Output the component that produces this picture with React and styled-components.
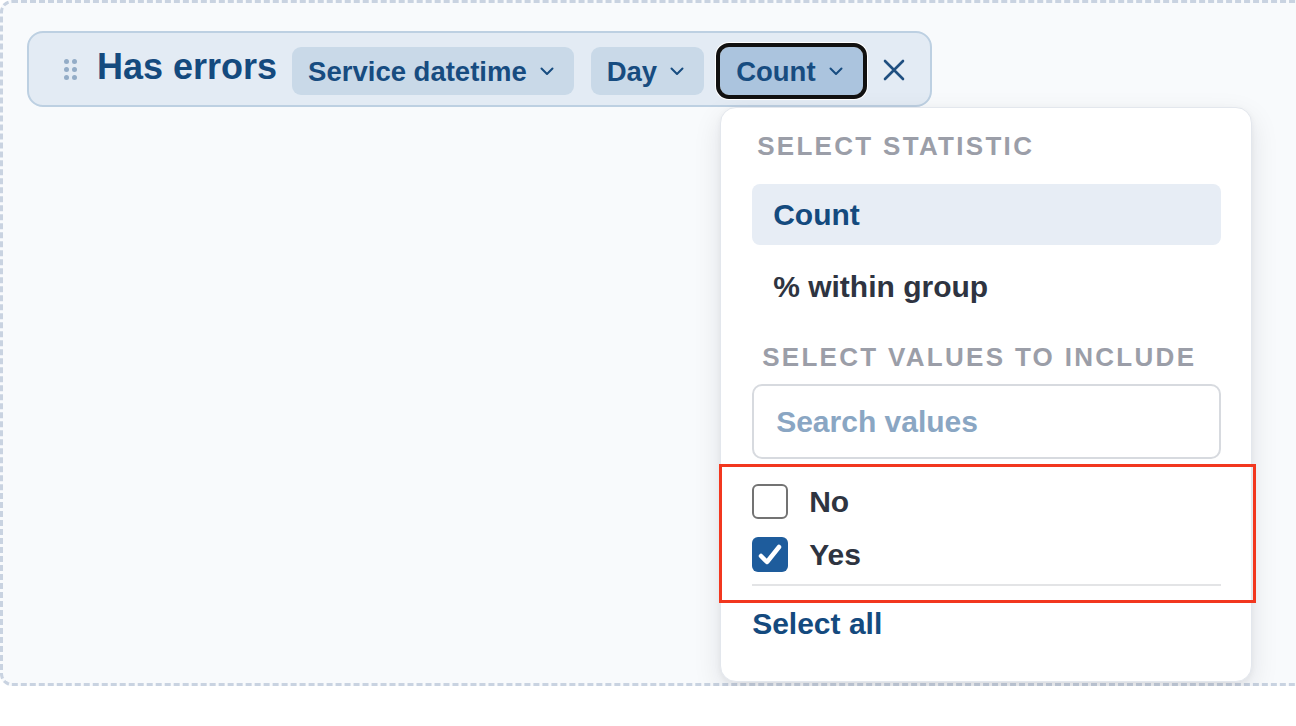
import React from "react";
import styled, { createGlobalStyle } from "styled-components";

const Global = createGlobalStyle`
  html, body { margin: 0; padding: 0; background: #ffffff; overflow: hidden; }
  body { font-family: "Liberation Sans", Arial, sans-serif; }
  * { box-sizing: border-box; }
`;

const Canvas = styled.div`
  width: calc(100% + 24px);
  height: 686px;
  border: 3px dashed #c9d3e1;
  border-radius: 12px;
  background: #f8fafc;
  padding: 28px 0 0 24px;
`;

const Pill = styled.div`
  display: inline-flex;
  align-items: center;
  height: 76px;
  padding: 0 25px 0 35px;
  border: 2px solid #bdd0e2;
  border-radius: 16px;
  background: #e3ebf4;
`;

const Handle = styled.div`
  display: grid;
  grid-template-columns: repeat(2, 5px);
  grid-auto-rows: 5px;
  gap: 3px;
  margin-right: 20px;
  span { width: 5px; height: 5px; border-radius: 50%; background: #93acc7; }
`;

const Title = styled.span`
  font-size: 36px;
  font-weight: 700;
  color: #144a7e;
  margin-right: 15px;
  margin-top: -4px;
`;

const ChipWrap = styled.div`
  position: relative;
  margin-right: ${(p) => p.$mr || 17}px;
  margin-top: 4px;
`;

const Chip = styled.div`
  display: flex;
  align-items: center;
  gap: 13px;
  height: 48px;
  padding: 1px 20px 0 16px;
  border-radius: 9px;
  background: ${(p) => (p.$active ? "#abc4de" : "#c9d9e8")};
  color: #174c80;
  font-size: 27.5px;
  font-weight: 700;
  white-space: nowrap;
  outline: ${(p) => (p.$active ? "4px solid #111111" : "none")};
  outline-offset: 0;
  box-shadow: ${(p) => (p.$active ? "0 0 0 5px #ffffff" : "none")};
`;

const CloseBtn = styled.div`
  display: flex;
  align-items: center;
  justify-content: center;
  margin-top: 2px;
`;

const Popup = styled.div`
  position: absolute;
  left: 0;
  top: calc(100% + 12px);
  width: 532px;
  height: 575px;
  background: #ffffff;
  border: 1px solid #e3e7ed;
  border-radius: 16px;
  box-shadow: 0 10px 28px rgba(15, 23, 42, 0.1), 0 2px 6px rgba(15, 23, 42, 0.05);
  padding: 23px 30px 0 31px;
  z-index: 10;
`;

const SectionTitle = styled.div`
  font-size: 26px;
  line-height: 30px;
  font-weight: 700;
  letter-spacing: 2.3px;
  color: #9b9ea8;
  white-space: nowrap;
  margin-left: ${(p) => p.$indent}px;
  margin-top: ${(p) => p.$mt || 0}px;
`;

const StatList = styled.div`
  display: flex;
  flex-direction: column;
  gap: 11px;
  margin-top: 23px;
`;

const StatItem = styled.div`
  height: 61px;
  display: flex;
  align-items: center;
  padding-left: 21px;
  border-radius: 8px;
  background: ${(p) => (p.$selected ? "#e7edf5" : "transparent")};
  color: ${(p) => (p.$selected ? "#144a7e" : "#2e3441")};
  font-size: 30px;
  font-weight: 700;
`;

const Search = styled.div`
  margin-top: 12px;
  height: 75px;
  border: 2px solid #d7dadf;
  border-radius: 10px;
  display: flex;
  align-items: center;
  padding-left: 22px;
  font-size: 30px;
  font-weight: 700;
  color: #8aa6c3;
`;

const ValueSection = styled.div`
  position: relative;
  padding-top: 25px;
  &::after {
    content: "";
    position: absolute;
    top: 5px;
    left: -33px;
    right: -35px;
    bottom: -17px;
    border: 3px solid #f2371f;
    pointer-events: none;
  }
`;

const ValueList = styled.div`
  display: flex;
  flex-direction: column;
  gap: 18px;
`;

const ValueRow = styled.div`
  display: flex;
  align-items: center;
  gap: 21px;
  height: 35px;
  font-size: 30px;
  font-weight: 700;
  color: #2e3441;
`;

const Box = styled.span`
  width: 36px;
  height: 35px;
  border-radius: 6px;
  display: flex;
  align-items: center;
  justify-content: center;
  border: ${(p) => (p.$checked ? "none" : "2.5px solid #737373")};
  background: ${(p) => (p.$checked ? "#1e5c9c" : "#ffffff")};
`;

const Divider = styled.div`
  height: 2px;
  background: #e3e4e6;
  margin-top: 12px;
`;

const SelectAll = styled.div`
  margin-top: 20px;
  line-height: 36px;
  font-size: 30px;
  font-weight: 700;
  color: #144a7e;
`;

const Chevron = () => (
  <svg width="14" height="9" viewBox="0 0 14 9" fill="none">
    <polyline points="1.5,1.5 7,7 12.5,1.5" stroke="#174c80" strokeWidth="2" strokeLinecap="round" strokeLinejoin="round" />
  </svg>
);

const XIcon = () => (
  <svg width="22" height="22" viewBox="0 0 22 22" fill="none">
    <path d="M2 2L20 20M20 2L2 20" stroke="#1f4f80" strokeWidth="2.6" strokeLinecap="round" />
  </svg>
);

const Check = () => (
  <svg width="26" height="24" viewBox="0 0 26 24" fill="none">
    <polyline points="4,13 10,19 22,4" stroke="#ffffff" strokeWidth="4.5" strokeLinecap="round" strokeLinejoin="round" />
  </svg>
);

export default function App() {
  return (
    <>
      <Global />
      <Canvas>
        <Pill>
          <Handle>
            {Array.from({ length: 6 }).map((_, i) => (
              <span key={i} />
            ))}
          </Handle>
          <Title>Has errors</Title>
          <ChipWrap>
            <Chip>
              Service datetime <Chevron />
            </Chip>
          </ChipWrap>
          <ChipWrap $mr={16}>
            <Chip>
              Day <Chevron />
            </Chip>
          </ChipWrap>
          <ChipWrap $mr={20}>
            <Chip $active>
              Count <Chevron />
            </Chip>
            <Popup>
              <SectionTitle $indent={5}>SELECT STATISTIC</SectionTitle>
              <StatList>
                <StatItem $selected>Count</StatItem>
                <StatItem>% within group</StatItem>
              </StatList>
              <SectionTitle $indent={10} $mt={25}>SELECT VALUES TO INCLUDE</SectionTitle>
              <Search>Search values</Search>
              <ValueSection>
                <ValueList>
                  <ValueRow>
                    <Box />
                    No
                  </ValueRow>
                  <ValueRow>
                    <Box $checked>
                      <Check />
                    </Box>
                    Yes
                  </ValueRow>
                </ValueList>
                <Divider />
              </ValueSection>
              <SelectAll>Select all</SelectAll>
            </Popup>
          </ChipWrap>
          <CloseBtn>
            <XIcon />
          </CloseBtn>
        </Pill>
      </Canvas>
    </>
  );
}
